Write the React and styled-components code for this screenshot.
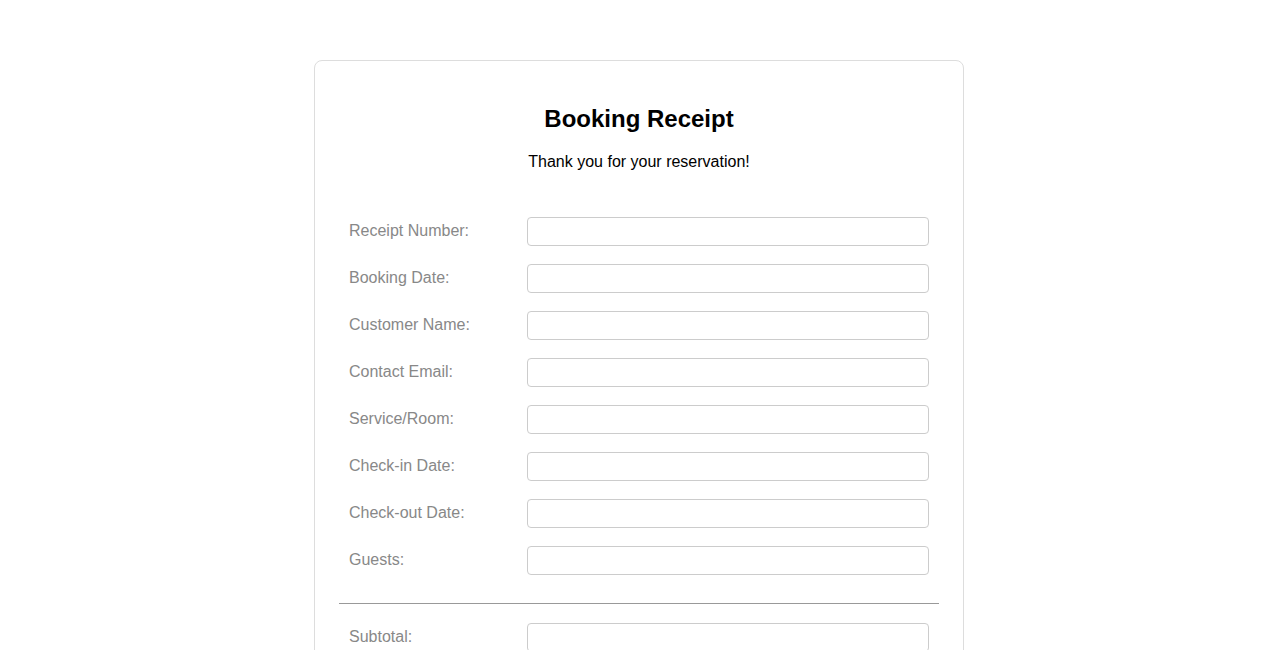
import React from 'react';
import styled, { createGlobalStyle } from 'styled-components';

const GlobalStyle = createGlobalStyle`
  body {
    margin: 0;
    background: #fff;
    font-family: "Liberation Sans", Arial, sans-serif;
  }
`;

const Page = styled.div`
  padding: 60px 0 40px;
  display: flex;
  justify-content: center;
`;

const Card = styled.div`
  width: 600px;
  padding: 0 24px 24px;
  border: 1px solid #ddd;
  border-radius: 8px;
  background: #fff;
`;

const Title = styled.h2`
  margin: 20px 0 0;
  padding-top: 24px;
  font-size: 24px;
  font-weight: bold;
  text-align: center;
  color: #000;
`;

const Subtitle = styled.p`
  margin: 20px 0 0;
  font-size: 16px;
  text-align: center;
  color: #000;
`;

const Section = styled.div`
  display: flex;
  flex-direction: column;
  gap: 18px;
  margin-top: ${(p) => p.$top}px;
`;

const Row = styled.div`
  display: flex;
  align-items: center;
  padding: 0 10px;
`;

const Label = styled.label`
  width: 178px;
  flex-shrink: 0;
  margin-bottom: 2px;
  font-size: 16px;
  color: #888;
`;

const Input = styled.input`
  flex: 1;
  height: 29px;
  box-sizing: border-box;
  border: 1px solid #ccc;
  border-radius: 4px;
  padding: 4px 8px;
  font-family: inherit;
  font-size: 14px;
`;

const Divider = styled.hr`
  border: none;
  border-top: 1px solid #999;
  margin: 28px 0 0;
`;

const details = [
  'Receipt Number:',
  'Booking Date:',
  'Customer Name:',
  'Contact Email:',
  'Service/Room:',
  'Check-in Date:',
  'Check-out Date:',
  'Guests:',
];

const totals = ['Subtotal:', 'Tax:', 'Total:'];

const Field = ({ label }) => (
  <Row>
    <Label>{label}</Label>
    <Input type="text" />
  </Row>
);

export default function App() {
  return (
    <>
      <GlobalStyle />
      <Page>
        <Card>
          <Title>Booking Receipt</Title>
          <Subtitle>Thank you for your reservation!</Subtitle>
          <Section $top={46}>
            {details.map((l) => (
              <Field key={l} label={l} />
            ))}
          </Section>
          <Divider />
          <Section $top={19}>
            {totals.map((l) => (
              <Field key={l} label={l} />
            ))}
          </Section>
        </Card>
      </Page>
    </>
  );
}
